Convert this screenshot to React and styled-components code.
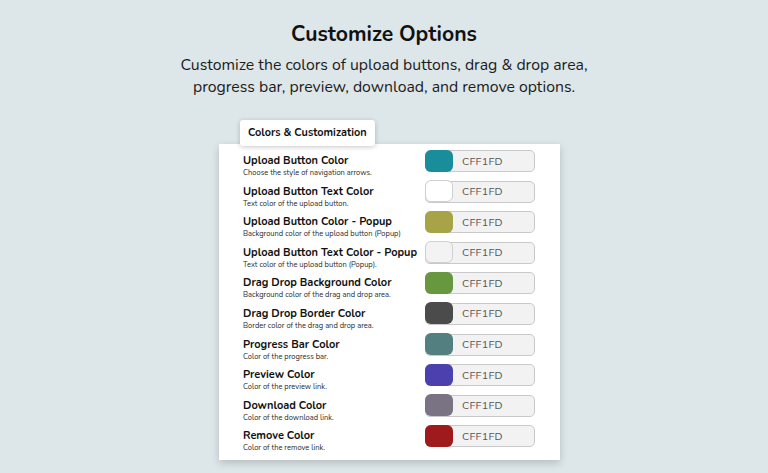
import React from "react";
import styled, { createGlobalStyle } from "styled-components";

const GlobalStyle = createGlobalStyle`
  body {
    margin: 0;
    background: #dde6e8;
    font-family: "Nunito", "Noto Sans", sans-serif;
    color: #111;
  }
`;

const Page = styled.div`
  height: 473px;
  overflow: hidden;
  padding-top: 20px;
  box-sizing: border-box;
`;

const Title = styled.h1`
  margin: 0;
  text-align: center;
  font-size: 21.2px;
  line-height: 28px;
  font-weight: 700;
  color: #111;
`;

const Subtitle = styled.p`
  margin: 6px auto 0;
  width: 450px;
  text-align: center;
  font-size: 15.8px;
  line-height: 22px;
  color: #1c1c1c;
`;

const PanelArea = styled.div`
  width: 341px;
  margin: 22px 0 0 calc(50% - 165px);
`;

const Tab = styled.div`
  position: relative;
  z-index: 1;
  display: inline-block;
  margin: 0 0 -2px 21px;
  padding: 0 8px;
  height: 26px;
  line-height: 26px;
  background: #fff;
  border-radius: 3px;
  box-shadow: 0 1px 5px rgba(0, 0, 0, 0.22);
  font-size: 10.9px;
  font-weight: 700;
  color: #111;
`;

const Card = styled.div`
  background: #fff;
  padding: 5px 25px 5px 24px;
  box-shadow: 0 3px 8px rgba(0, 0, 0, 0.18);
`;

const Row = styled.div`
  display: flex;
  justify-content: space-between;
  align-items: flex-start;
  height: 30.6px;
`;

const Text = styled.div`
  margin-top: 5px;
`;

const Label = styled.div`
  font-size: 11px;
  line-height: 14px;
  font-weight: 700;
  color: #111;
`;

const Hint = styled.div`
  font-size: 7.5px;
  line-height: 10px;
  color: #2a2a2a;
`;

const Picker = styled.div`
  margin-top: 1px;
  display: flex;
  align-items: center;
  width: 110px;
  height: 22px;
  box-sizing: border-box;
  border: 1px solid #c9c9c9;
  border-radius: 5px;
  background: #f2f2f2;
`;

const Swatch = styled.div`
  width: 28px;
  height: 22px;
  margin: -1px 0 0 -1px;
  border-radius: 6px;
  background: ${(p) => p.$color};
  border: ${(p) => (p.$light ? "1px solid #cfcfcf" : "none")};
  box-sizing: border-box;
`;

const Code = styled.span`
  margin-left: 9px;
  font-size: 10.8px;
  color: #555;
  letter-spacing: 0.2px;
`;

const options = [
  { label: "Upload Button Color", hint: "Choose the style of navigation arrows.", color: "#1a8d9b" },
  { label: "Upload Button Text Color", hint: "Text color of the upload button.", color: "#ffffff", light: true },
  { label: "Upload Button Color - Popup", hint: "Background color of the upload button (Popup)", color: "#a7a447" },
  { label: "Upload Button Text Color - Popup", hint: "Text color of the upload button (Popup).", color: "#f3f3f3", light: true },
  { label: "Drag Drop Background Color", hint: "Background color of the drag and drop area.", color: "#67973f" },
  { label: "Drag Drop Border Color", hint: "Border color of the drag and drop area.", color: "#4b4b4b" },
  { label: "Progress Bar Color", hint: "Color of the progress bar.", color: "#537f80" },
  { label: "Preview Color", hint: "Color of the preview link.", color: "#4c3fae" },
  { label: "Download Color", hint: "Color of the download link.", color: "#797384" },
  { label: "Remove Color", hint: "Color of the remove link.", color: "#9e1a1d" },
];

const App = () => {
  return (
    <>
      <GlobalStyle />
      <Page>
        <Title>Customize Options</Title>
        <Subtitle>
          Customize the colors of upload buttons, drag &amp; drop area,
          progress bar, preview, download, and remove options.
        </Subtitle>
        <PanelArea>
          <Tab>Colors &amp; Customization</Tab>
          <Card>
            {options.map((o) => (
              <Row key={o.label}>
                <Text>
                  <Label>{o.label}</Label>
                  <Hint>{o.hint}</Hint>
                </Text>
                <Picker>
                  <Swatch $color={o.color} $light={o.light} />
                  <Code>CFF1FD</Code>
                </Picker>
              </Row>
            ))}
          </Card>
        </PanelArea>
      </Page>
    </>
  );
};

export default App;
